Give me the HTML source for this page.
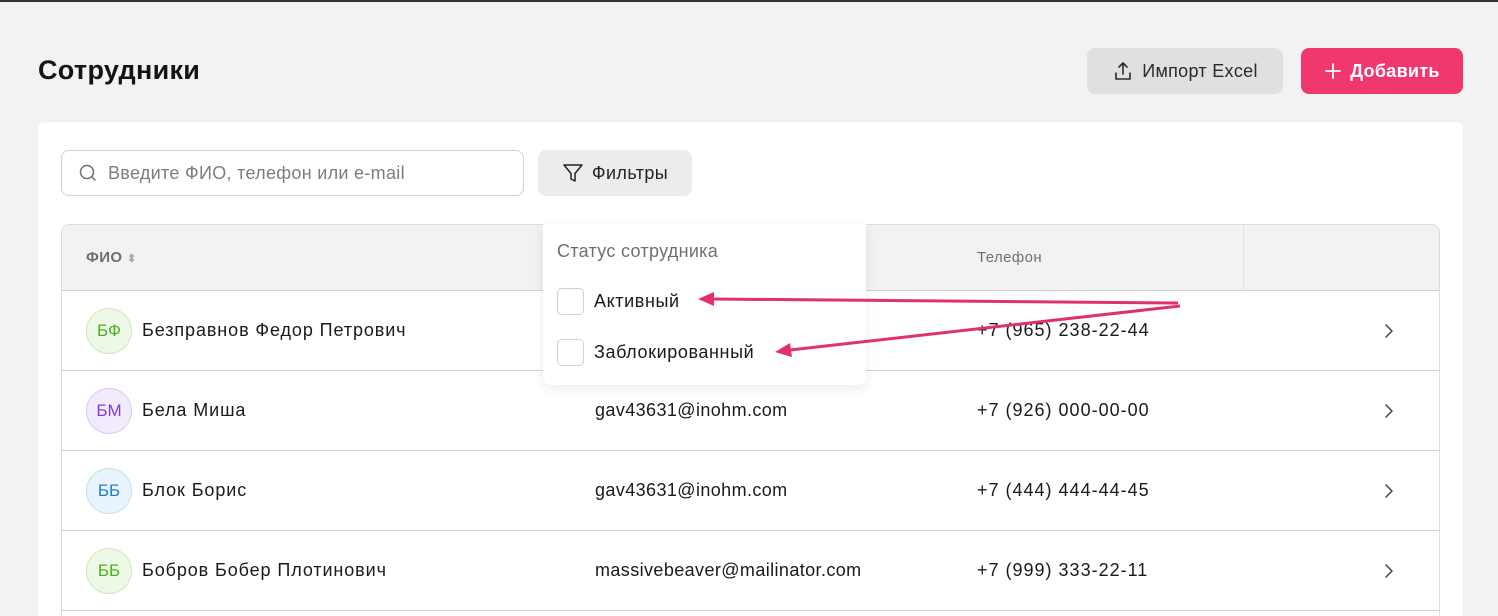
<!DOCTYPE html>
<html><head><meta charset="utf-8"><style>
*{box-sizing:border-box;margin:0;padding:0}
html,body{width:1498px;height:616px;overflow:hidden}
body{background:#f2f2f2;font-family:"Liberation Sans",sans-serif;color:#1a1a1a;position:relative}
.topline{position:absolute;left:0;top:0;width:1498px;height:2px;background:#333}
h1{position:absolute;left:38px;top:55px;font-size:27px;font-weight:600;color:#141414;letter-spacing:0.3px}
.btn{position:absolute;border-radius:8px;font-size:18px;display:flex;align-items:center;justify-content:center;gap:8px;letter-spacing:0.3px}
.imp{left:1087px;top:48px;width:196px;height:46px;background:#dfe0e2;color:#2a2a2a}
.add{left:1301px;top:48px;width:162px;height:46px;background:#f0386f;color:#fff;font-weight:600}
.card{position:absolute;left:38px;top:122px;width:1425px;height:520px;background:#fff;border-radius:6px}
.search{position:absolute;left:61px;top:150px;width:463px;height:46px;border:1.5px solid #cfd1d5;border-radius:8px;display:flex;align-items:center;padding-left:16px;gap:10px;color:#7a7d85;font-size:18px;letter-spacing:0.3px}
.filt{position:absolute;left:538px;top:150px;width:154px;height:46px;background:#ececec;border-radius:8px;display:flex;align-items:center;justify-content:center;gap:8px;font-size:18px;color:#222;letter-spacing:0.4px}
.table{position:absolute;left:61px;top:224px;width:1379px;height:420px;border:1.5px solid #dcdcdf;border-radius:8px;overflow:hidden}
.th{height:66px;background:#f2f2f2;border-bottom:1.5px solid #d0d0d4;position:relative;font-size:15px;color:#6c6f76;letter-spacing:0.4px}
.row{height:80px;border-bottom:1.5px solid #d0d0d4;position:relative;font-size:18px;color:#1a1a1a;letter-spacing:0.9px}
.av{position:absolute;left:24px;top:17px;width:46px;height:46px;border-radius:50%;display:flex;align-items:center;justify-content:center;font-size:17px;letter-spacing:0}
.c1{position:absolute;left:80px;top:29px}
.c2{position:absolute;left:533px;top:29px;letter-spacing:0.4px}
.c3{position:absolute;left:915px;top:29px;letter-spacing:1px}
.chev{position:absolute;left:1322px;top:32px}
.dd{position:absolute;left:543px;top:224px;width:323px;height:161px;background:#fff;border-radius:0 0 8px 8px;box-shadow:0 4px 12px rgba(0,0,0,.08)}
.dd .t{position:absolute;left:14px;top:17px;font-size:18px;color:#6c6f76;letter-spacing:0.3px}
.cb{position:absolute;left:14px;width:27px;height:27px;border:1.5px solid #cfd1d5;border-radius:5px}
.lb{position:absolute;left:51px;font-size:18px;color:#1a1a1a;letter-spacing:0.6px}
</style></head><body>
<div class="topline"></div>
<h1>Сотрудники</h1>
<div class="btn imp"><svg width="22" height="22" viewBox="0 0 22 22" fill="none" stroke="#2a2a2a" stroke-width="1.6" stroke-linecap="round" stroke-linejoin="round"><path d="M11 14V3M7 7l4-4 4 4M4 13v6h14v-6"/></svg>Импорт Excel</div>
<div class="btn add"><svg width="18" height="18" viewBox="0 0 18 18" stroke="#fff" stroke-width="1.8" stroke-linecap="round"><path d="M9 2v14M2 9h14"/></svg>Добавить</div>
<div class="card"></div>
<div class="search"><svg width="20" height="20" viewBox="0 0 20 20" fill="none" stroke="#6c6f76" stroke-width="1.5" stroke-linecap="round"><circle cx="9" cy="9" r="6.5"/><path d="M14 14L17 17"/></svg>Введите ФИО, телефон или e-mail</div>
<div class="filt"><svg width="22" height="22" viewBox="0 0 22 22" fill="none" stroke="#222" stroke-width="1.5" stroke-linejoin="round"><path d="M2 3h18l-7 8.5V19l-4-2v-5.5z"/></svg>Фильтры</div>
<div class="table">
<div class="th"><span style="position:absolute;left:24px;top:24px;font-weight:600">ФИО <span style="color:#aaa;font-size:11px">⬍</span></span><span style="position:absolute;left:915px;top:24px">Телефон</span><div style="position:absolute;left:1181px;top:0;width:1px;height:66px;background:#e2e2e2"></div></div>
<div class="row"><div class="av" style="background:#eef8e6;border:1px solid #cfe8bd;color:#4caf1e">БФ</div><span class="c1">Безправнов Федор Петрович</span><span class="c3">+7 (965) 238-22-44</span><svg class="chev" width="10" height="16" viewBox="0 0 10 16" fill="none" stroke="#444" stroke-width="1.5" stroke-linecap="round" stroke-linejoin="round"><path d="M2 2l6 6-6 6"/></svg></div>
<div class="row"><div class="av" style="background:#f1ebfd;border:1px solid #d8c8f8;color:#7b3fe4">БМ</div><span class="c1">Бела Миша</span><span class="c2">gav43631@inohm.com</span><span class="c3">+7 (926) 000-00-00</span><svg class="chev" width="10" height="16" viewBox="0 0 10 16" fill="none" stroke="#444" stroke-width="1.5" stroke-linecap="round" stroke-linejoin="round"><path d="M2 2l6 6-6 6"/></svg></div>
<div class="row"><div class="av" style="background:#e8f3fb;border:1px solid #c4def0;color:#1f7ec4">ББ</div><span class="c1">Блок Борис</span><span class="c2">gav43631@inohm.com</span><span class="c3">+7 (444) 444-44-45</span><svg class="chev" width="10" height="16" viewBox="0 0 10 16" fill="none" stroke="#444" stroke-width="1.5" stroke-linecap="round" stroke-linejoin="round"><path d="M2 2l6 6-6 6"/></svg></div>
<div class="row"><div class="av" style="background:#eef8e6;border:1px solid #cfe8bd;color:#4caf1e">ББ</div><span class="c1">Бобров Бобер Плотинович</span><span class="c2">massivebeaver@mailinator.com</span><span class="c3">+7 (999) 333-22-11</span><svg class="chev" width="10" height="16" viewBox="0 0 10 16" fill="none" stroke="#444" stroke-width="1.5" stroke-linecap="round" stroke-linejoin="round"><path d="M2 2l6 6-6 6"/></svg></div>
</div>
<div class="dd"><div class="t">Статус сотрудника</div>
<div class="cb" style="top:64px"></div><div class="lb" style="top:67px">Активный</div>
<div class="cb" style="top:115px"></div><div class="lb" style="top:118px">Заблокированный</div></div>
<svg style="position:absolute;left:0;top:0" width="1498" height="616"><g stroke="#e0306f" stroke-width="3" fill="#e0306f"><path d="M1178 303L712 299" fill="none"/><path d="M698 299l16-7v14z" stroke="none"/><path d="M1180 306L790 350" fill="none"/><path d="M775 352l15-9 2 14z" stroke="none"/></g></svg>
</body></html>
